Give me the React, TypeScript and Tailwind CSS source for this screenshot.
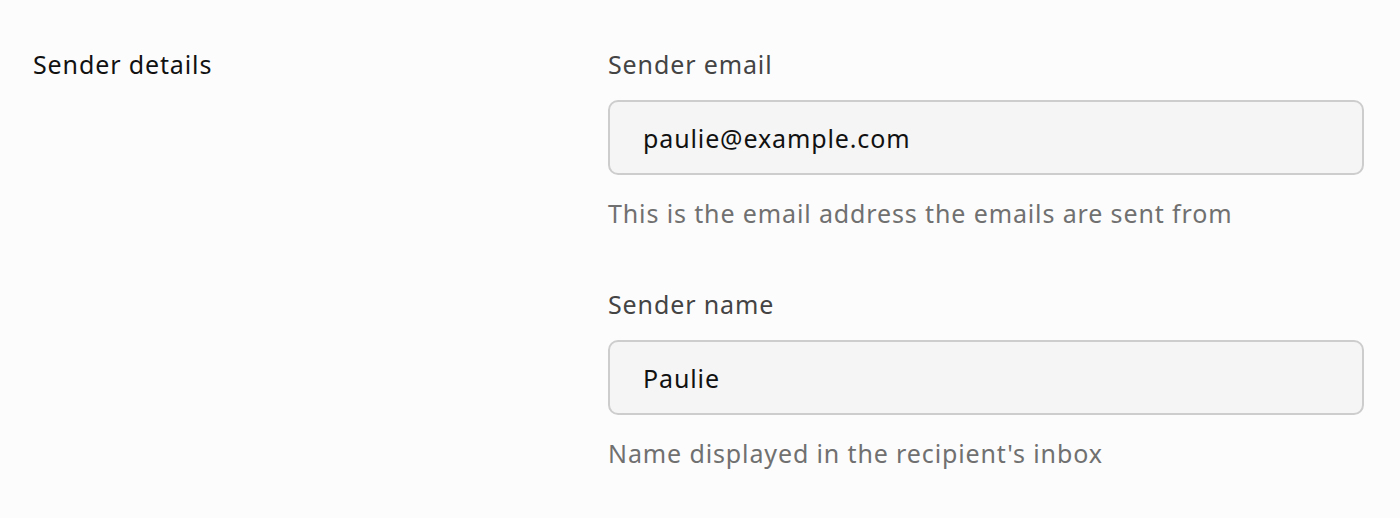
export default function App() {
  return (
    <div className="min-h-screen bg-[#fcfcfc] font-['Noto_Sans',sans-serif] text-[25px] tracking-[0.035em]">
      <div className="flex pt-[48px] pl-[33px] pr-[36px]">
        {/* Section title */}
        <div className="w-[575px] flex-shrink-0">
          <h2 className="leading-[32px] text-[#111]">Sender details</h2>
        </div>

        {/* Fields */}
        <div className="flex-1">
          <label className="block leading-[32px] text-[#444]">Sender email</label>
          <input
            className="mt-[20px] block w-full h-[75px] rounded-[10px] border-2 border-[#cdcdcd] bg-[#f5f5f5] px-[33px] text-[25px] tracking-[0.035em] text-[#111] outline-none"
            defaultValue="paulie@example.com"
          />
          <p className="mt-[22px] leading-[32px] text-[#707070]">
            This is the email address the emails are sent from
          </p>

          <label className="mt-[59px] block leading-[32px] text-[#444]">Sender name</label>
          <input
            className="mt-[20px] block w-full h-[75px] rounded-[10px] border-2 border-[#cdcdcd] bg-[#f5f5f5] px-[33px] text-[25px] tracking-[0.035em] text-[#111] outline-none"
            defaultValue="Paulie"
          />
          <p className="mt-[22px] leading-[32px] text-[#707070]">
            Name displayed in the recipient's inbox
          </p>
        </div>
      </div>
    </div>
  );
}
